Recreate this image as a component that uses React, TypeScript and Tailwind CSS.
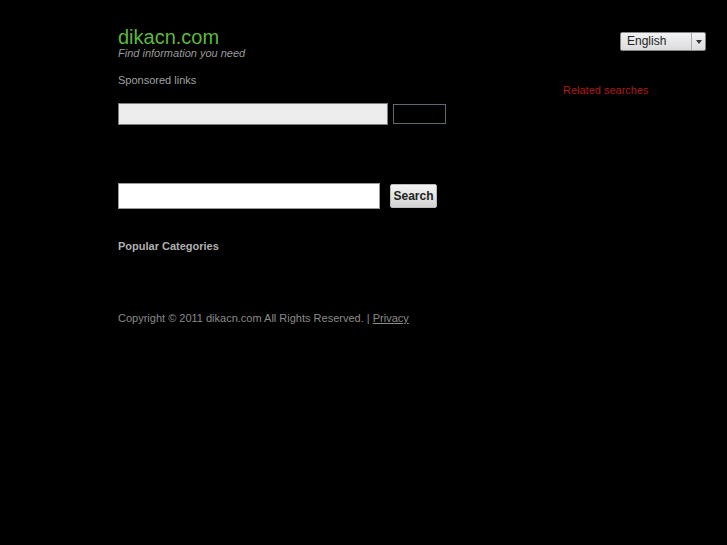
export default function App() {
  return (
    <div className="min-h-[545px] w-full bg-black font-['Liberation_Sans',Arial,sans-serif]">
      <div className="flex pl-[118px] pt-[26px]">
        <div className="w-[445px]">
          <h1 className="text-[20px] leading-[22px] text-[#5cb83a]">dikacn.com</h1>
          <p className="-mt-[2px] text-[11px] italic leading-[14px] text-[#9a9a9a]">Find information you need</p>
          <p className="mt-[13px] text-[11px] leading-[14px] text-[#a0a0a0]">Sponsored links</p>
          <div className="mt-[16px] flex items-center gap-[5px]">
            <div className="h-[22px] w-[270px] border border-[#7a7e80] bg-[#ededed]" />
            <div className="h-[20px] w-[53px] border border-[#5c6a70] bg-black" />
          </div>
          <div className="mt-[58px] flex items-center gap-[10px]">
            <input className="h-[26px] w-[262px] border border-[#9a9a9a] bg-white outline-none" />
            <button className="h-[24px] w-[47px] rounded-[2px] border border-[#bbb] bg-gradient-to-b from-[#f4f4f4] to-[#d4d4d4] text-[12px] font-bold text-[#222]">
              Search
            </button>
          </div>
          <p className="mt-[30px] text-[11px] font-bold leading-[14px] text-[#b0b0b0]">Popular Categories</p>
          <p className="mt-[58px] text-[11px] leading-[14px] text-[#8a8a8a]">
            Copyright © 2011 dikacn.com All Rights Reserved. | <a className="underline">Privacy</a>
          </p>
        </div>
        <div className="w-[145px]">
          <div className="ml-[57px] mt-[6px] flex h-[19px] w-[86px] items-stretch rounded-[2px] border border-[#888] bg-gradient-to-b from-[#f2f2f4] to-[#dcdcde]">
            <span className="flex-1 pl-[6px] text-[12px] leading-[17px] text-[#222]">English</span>
            <span className="flex w-[14px] items-center justify-center border-l border-[#aaa]">
              <span className="h-0 w-0 border-x-[3.5px] border-t-[4px] border-x-transparent border-t-[#333]" />
            </span>
          </div>
          <p className="mt-[32px] text-[11px] leading-[14px] text-[#b01a1a]">Related searches</p>
        </div>
      </div>
    </div>
  )
}
